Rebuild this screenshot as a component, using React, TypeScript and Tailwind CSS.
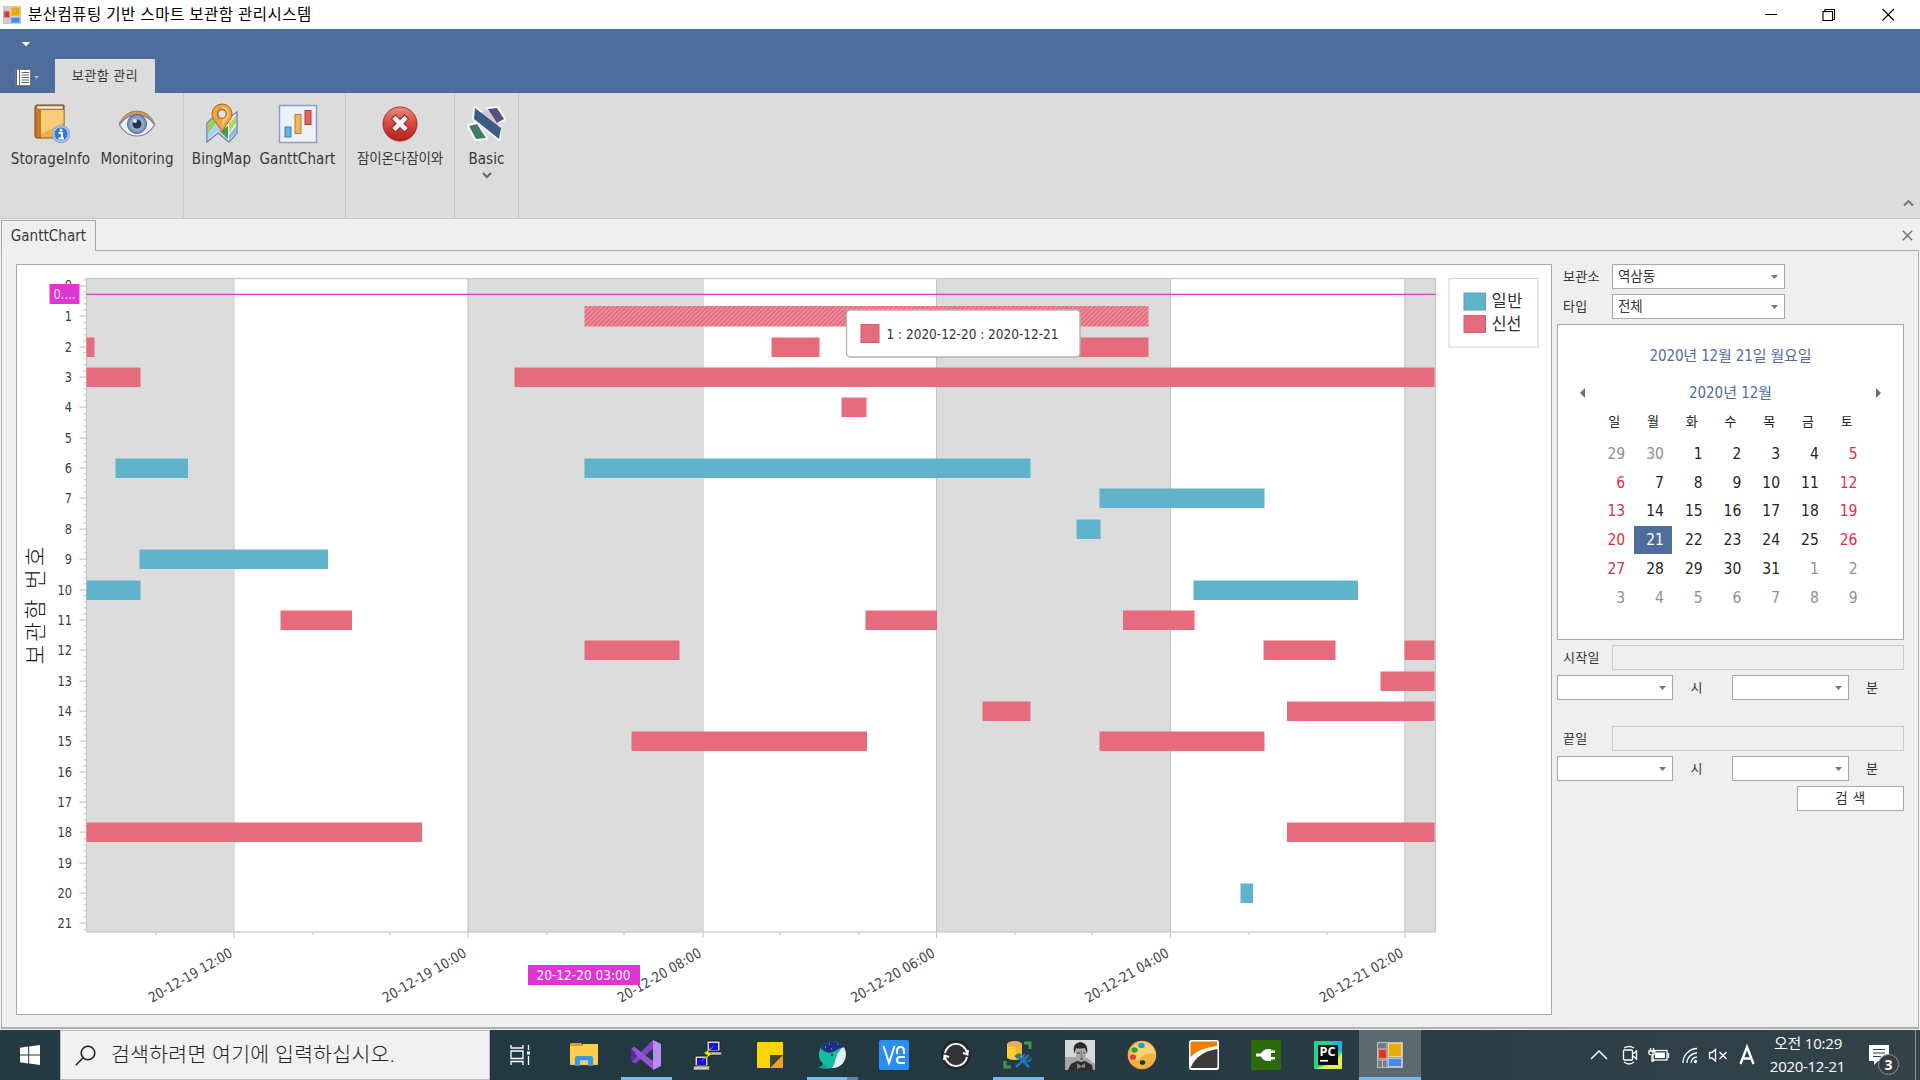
import React from "react";

const SANS = "font-['DejaVu_Sans_Condensed','DejaVu_Sans','Noto_Sans_CJK_KR',sans-serif] [font-stretch:condensed]";
const UI = "font-['Open_Sans','Noto_Sans_CJK_KR',sans-serif] [font-stretch:normal]";

/* ---------- ribbon icons ---------- */

const FormIcon = ({ size }: { size: number }) => (
  <svg width={size} height={size} viewBox="0 0 26 26">
    <rect x="0.5" y="0.5" width="25" height="25" fill="#8f979b" fillOpacity=".45" stroke="#b9bec0" />
    <path d="M1 7H10M10 1V25M1 18H10M5.500 18V25M10 16H25" stroke="#c4c8ca" />
    <rect x="11.500" y="1.500" width="13" height="13" fill="#e6ac0c" stroke="#f5d977" />
    <rect x="1.500" y="7.500" width="8" height="9" fill="#d33b33" stroke="#f08d83" />
    <rect x="11.500" y="16.500" width="13" height="8" fill="#4c86e8" stroke="#a9c8fb" />
  </svg>
);

const BookIcon = () => (
  <svg width="40" height="42" viewBox="0 0 40 42">
    <path d="M4 4Q4 2 6 2H33V35H6Q4 35 4 33Z" fill="#c77a25" stroke="#80430f" />
    <path d="M6 3H32V6H7Q5 5 6 3Z" fill="#f4f4f4" stroke="#89613b" strokeWidth=".6" />
    <path d="M10 7H32.500V34.500H10Z" fill="#ecb04b" />
    <path d="M10 7H32.500V20L10 31Z" fill="#f6cd79" />
    <circle cx="30" cy="31" r="8.500" fill="#3978ca" stroke="#9ab4dc" strokeWidth="1.500" />
    <circle cx="30" cy="31" r="7.200" fill="none" stroke="#dce9fa" />
    <circle cx="30" cy="27" r="1.600" fill="#fff" />
    <path d="M27.500 30H31V35M27.500 35.500H33" stroke="#fff" strokeWidth="2" fill="none" />
  </svg>
);

const EyeIcon = () => (
  <svg width="40" height="42" viewBox="0 0 40 42">
    <path d="M2 21Q8 8 20 8Q32 8 38 21Q29 11 20 12Q10 12 2 21Z" fill="#c99562" stroke="#9a6838" strokeWidth=".7" />
    <path d="M2.500 22Q9 12 20 12Q31 12 37.500 22Q31 33 20 33Q9 33 2.500 22Z" fill="#edf0f8" stroke="#7483ad" strokeWidth="1.200" />
    <circle cx="20" cy="21" r="9.500" fill="#7c95b9" stroke="#4c6286" />
    <circle cx="20" cy="21" r="7" fill="#91abca" />
    <circle cx="20" cy="21" r="4.500" fill="#25344d" />
    <circle cx="18" cy="18" r="2" fill="#dce7f4" />
  </svg>
);

const MapIcon = () => (
  <svg width="40" height="42" viewBox="0 0 40 42">
    <path d="M5 20L13 13L21 19L35 9V30L27 39L16 30L5 39Z" fill="#eef3f2" stroke="#7185a5" strokeWidth="1.400" />
    <path d="M6 20L15 12V21L6 30Z" fill="#9ecb58" />
    <path d="M6 30L15 19L26 31V37L15 28L6 37Z" fill="#a9d3f2" />
    <path d="M27 21L34 12V20L27 30Z" fill="#b5d664" />
    <path d="M27 32L34 23V29L27 37Z" fill="#87bce4" />
    <path d="M18 28L26 23V36Z" fill="#3f9a52" />
    <path d="M20 29C17 22 10 17 10 11A10 10 0 0 1 30 11C30 17 23 22 20 29Z" fill="#efa43c" stroke="#a5671b" />
    <path d="M20 3Q28 4 27 13L20 24Z" fill="#f7c56b" />
    <circle cx="20" cy="11" r="4.300" fill="#e3e4df" stroke="#8b6a3a" strokeWidth="1.300" />
  </svg>
);

const GanttIcon = () => (
  <svg width="40" height="42" viewBox="0 0 40 42">
    <rect x="1.500" y="2.500" width="37" height="37" fill="#eef2fb" stroke="#8d9cc9" strokeWidth="1.500" />
    <rect x="7" y="24" width="6" height="10" fill="#6bb2e8" stroke="#3a7cb4" />
    <rect x="17" y="11.500" width="6" height="19" fill="#f2b65a" stroke="#b97a2e" />
    <rect x="27" y="7.500" width="6" height="14" fill="#e1625f" stroke="#b33b3c" />
  </svg>
);

const StopIcon = () => (
  <svg width="40" height="42" viewBox="0 0 40 42">
    <defs>
      <linearGradient id="stop" x1="0" y1="0" x2="0" y2="1">
        <stop offset="0" stopColor="#ee8d80" />
        <stop offset=".45" stopColor="#d84b40" />
        <stop offset="1" stopColor="#b81f1b" />
      </linearGradient>
    </defs>
    <circle cx="20" cy="21" r="17" fill="url(#stop)" stroke="#a32a25" />
    <path d="M15.500 16L24.500 25M24.500 16L15.500 25" stroke="#8f2522" strokeWidth="6.600" strokeLinecap="square" />
    <path d="M15.500 16L24.500 25M24.500 16L15.500 25" stroke="#f2f3fa" strokeWidth="4.600" strokeLinecap="square" />
  </svg>
);

const SkinIcon = () => (
  <svg width="42" height="42" viewBox="0 0 42 42">
    <g stroke="#fafafa" strokeWidth="4" strokeLinejoin="round">
      <path d="M9 5L33 25V36L8 15Z" fill="#fff" />
      <path d="M22 6L31 5L38 16L31 19Z" fill="#fff" />
      <path d="M3 23L11 21L20 35L10 36Z" fill="#fff" />
    </g>
    <path d="M22 6L33 14L31 25L12 12Z" fill="#cfcfcf" />
    <path d="M9 5L35 25L33 36L8 16Z" fill="#3c5c87" />
    <path d="M22 6L31 5L38 16L31 20Z" fill="#57507b" />
    <path d="M3 23L11 21L20 35L10 36Z" fill="#437c66" />
  </svg>
);

const RibbonButton = ({ icon, label, width, small, arrow }: { icon: React.ReactNode; label: string; width: string; small?: boolean; arrow?: boolean }) => (
  <div className={`${width} flex flex-col items-center pt-[10px]`}>
    <div className="h-[42px] flex justify-center">{icon}</div>
    <div className={`h-6 leading-6 whitespace-nowrap ${small ? "mt-[1px] mb-[1px] text-[13.5px] tracking-[-0.1px]" : "mt-[2px] text-[15px] tracking-[0.1px]"}`}>{label}</div>
    {arrow && (
      <svg width="10" height="7" viewBox="0 0 10 7" className="mt-[1px]">
        <path d="M1 1L5 5L9 1" fill="none" stroke="#666" strokeWidth="2" />
      </svg>
    )}
  </div>
);

/* ---------- chart ---------- */

const BLUE = "#61b3cc";
const RED = "#e66b7d";
const rowY = (n: number) => Math.round(286 + 30.350 * n);

const bars: [number, number, number, string][] = [
  [2, 87, 95, RED], [2, 772, 820, RED], [2, 1052, 1149, RED],
  [3, 87, 141, RED], [3, 515, 1435, RED], [4, 842, 867, RED],
  [6, 116, 188.500, BLUE], [6, 585, 1031, BLUE], [7, 1100, 1265, BLUE],
  [8, 1077, 1101, BLUE], [9, 140, 328.500, BLUE], [10, 87, 141, BLUE],
  [10, 1194, 1358.500, BLUE], [11, 281, 352.500, RED], [11, 866, 937.500, RED],
  [11, 1123.500, 1195, RED], [12, 585, 680, RED], [12, 1264, 1336, RED],
  [12, 1405, 1435, RED], [13, 1381, 1435, RED], [14, 983, 1031, RED],
  [14, 1287.500, 1435, RED], [15, 632, 867.500, RED], [15, 1100, 1265, RED],
  [18, 87, 422.500, RED], [18, 1287.500, 1435, RED], [20, 1241, 1253.500, BLUE],
];

const bands: [number, number][] = [[87, 234], [468, 703], [937, 1171], [1405, 1436]];
const xLabels: [number, string][] = [
  [234, "20-12-19 12:00"], [468, "20-12-19 10:00"], [703, "20-12-20 08:00"],
  [936.500, "20-12-20 06:00"], [1170.500, "20-12-21 04:00"], [1405, "20-12-21 02:00"],
];
const xMinor = [156, 313, 390, 547, 624, 780, 859, 1015, 1092, 1249, 1327];

const Chart = () => (
  <svg width="1534" height="749" viewBox="17.500 265 1534 749" className={SANS}>
    <defs>
      <pattern id="hatch" width="4.500" height="4.500" patternUnits="userSpaceOnUse">
        <rect width="4.500" height="4.500" fill={RED} />
        <path d="M-1 5.500L5.500 -1M-1 1L1 -1M3.500 5.500L5.500 3.500" stroke="#f0a3ae" strokeWidth="1" />
      </pattern>
    </defs>
    {bands.map(([a, b]) => <rect key={a} x={a} y="278" width={b - a} height="654" fill="#dcdcdc" />)}
    {xLabels.map(([x]) => <rect key={x} x={x} y="278" width="1" height="660" fill="#c3c3c3" />)}
    {xMinor.map((x) => <rect key={x} x={x} y="932" width="1" height="3" fill="#bbb" />)}
    <rect x="87" y="278.500" width="1349" height="653.500" fill="none" stroke="#c9c9c9" strokeWidth="1.300" />
    {Array.from({ length: 22 }, (_, n) => (
      <g key={n}>
        <rect x="80" y={rowY(n) - 0.5} width="7" height="1.200" fill="#c6c6c6" />
        {[1, 2, 3, 4].map((k) => {
          const y = rowY(n) - k * 6.070;
          return y > 279 ? <rect key={k} x="84" y={y - 0.5} width="3" height="1" fill="#c4c4c4" /> : null;
        })}
        <text x="72.500" y={rowY(n) + (n === 0 ? 4 : 5)} textAnchor="end" fontSize="14" fill="#3c3c3c" textLength={n > 9 ? 14.500 : 7.200} lengthAdjust="spacingAndGlyphs">{n}</text>
      </g>
    ))}
    <rect x="84" y="929" width="3" height="1" fill="#c4c4c4" />
    {bars.map(([n, a, b, c]) => (
      <rect key={`${n}-${a}`} x={a} y={rowY(n) - 9.500} width={b - a} height="19.500" fill={c} />
    ))}
    <rect x="585" y="306" width="564" height="20.500" fill="url(#hatch)" />
    <rect x="87" y="293.700" width="1349" height="1.300" fill="#e03bd0" />
    <rect x="50" y="284" width="30" height="20" fill="#df35d2" />
    <text x="54" y="299" fontSize="14" fill="#fff" fillOpacity=".9" textLength="22" lengthAdjust="spacingAndGlyphs">0....</text>
    {xLabels.map(([x, t]) => (
      <text key={x} transform={`translate(${x} 956) rotate(-30)`} textAnchor="end" fontSize="14" fill="#444" textLength="94" lengthAdjust="spacingAndGlyphs">{t}</text>
    ))}
    <rect x="528.500" y="965" width="112" height="20" fill="#df35d2" />
    <text x="537" y="980" fontSize="14" fill="#fff" textLength="94" lengthAdjust="spacingAndGlyphs">20-12-20 03:00</text>
    <text transform="translate(43 664.5) rotate(-90)" fontSize="21.500" fill="#111" fontWeight="300" textLength="118" className="font-['Noto_Sans_CJK_KR',sans-serif]">보관함 번호</text>

    <rect x="1449.500" y="278.500" width="89" height="68.500" fill="#fff" stroke="#d0d0d0" />
    <rect x="1464.500" y="293" width="21.500" height="17" fill={BLUE} stroke="#5aa2b9" />
    <rect x="1464.500" y="315.500" width="21.500" height="17" fill={RED} stroke="#cf6172" />
    <text x="1492" y="307" fontSize="16.500" fill="#333" textLength="31" className="font-['Noto_Sans_CJK_KR',sans-serif]">일반</text>
    <text x="1492" y="330" fontSize="16.500" fill="#333" textLength="30" className="font-['Noto_Sans_CJK_KR',sans-serif]">신선</text>

    <rect x="847" y="310" width="233.500" height="47" rx="4" fill="#fff" stroke="#b3b3b3" strokeWidth="1.400" />
    <rect x="861.500" y="324.500" width="18" height="18" fill={RED} stroke="#d0606f" />
    <text x="887" y="339" fontSize="14" fill="#333" textLength="172" lengthAdjust="spacingAndGlyphs">1 : 2020-12-20 : 2020-12-21</text>
  </svg>
);

/* ---------- side form ---------- */

const Combo = ({ width, text }: { width: string; text?: string }) => (
  <div className={`${width} h-[25px] shrink-0 bg-white border border-[#a8a8a8] flex items-center justify-between pl-[5px] pr-[6px] text-[13.5px]`}>
    <span className="tracking-[-0.1px]">{text}</span>
    <svg width="7" height="4" viewBox="0 0 7 4"><path d="M0 0H7L3.500 4Z" fill="#777" /></svg>
  </div>
);

const Label = ({ children }: { children: React.ReactNode }) => (
  <div className="w-[55px] pl-[6px] shrink-0 text-[13px] tracking-[0.3px]">{children}</div>
);

const weeks = [
  [29, 30, 1, 2, 3, 4, 5], [6, 7, 8, 9, 10, 11, 12], [13, 14, 15, 16, 17, 18, 19],
  [20, 21, 22, 23, 24, 25, 26], [27, 28, 29, 30, 31, 1, 2], [3, 4, 5, 6, 7, 8, 9],
];

const dayColor = (w: number, c: number, d: number) => {
  if ((w === 0 && d > 20) || (w > 3 && d < 15)) return "text-[#8f8f8f]";
  if (w === 3 && c === 1) return "bg-[#4f6d9c] text-white";
  return c === 0 || c === 6 ? "text-[#dc2f4a]" : "text-[#252525]";
};

const Calendar = () => (
  <div className="h-[316px] w-[347px] bg-white border border-[#a8a8a8] flex flex-col">
    <div className="mt-[19px] h-6 leading-6 text-center text-[15px] text-[#4f6d9c] tracking-[-0.15px]">2020년 12월 21일 월요일</div>
    <div className="mt-[13px] h-6 flex items-center justify-between px-[22px] text-[15px] text-[#4f6d9c]">
      <svg width="5" height="10" viewBox="0 0 5 10"><path d="M5 0V10L0 5Z" fill="#6e6e6e" /></svg>
      <span className="tracking-[-0.05px]">2020년 12월</span>
      <svg width="5" height="10" viewBox="0 0 5 10"><path d="M0 0V10L5 5Z" fill="#6e6e6e" /></svg>
    </div>
    <div className="ml-[37px] w-[271px] grid grid-cols-7 mt-[4px] h-[26px] text-center text-[13px] leading-[26px] text-[#222]">
      {["일", "월", "화", "수", "목", "금", "토"].map((d) => <div key={d}>{d}</div>)}
    </div>
    <div className="ml-[37px] w-[271px] h-[173px] grid grid-cols-7 grid-rows-6 mt-[4px] text-[15.5px]">
      {weeks.flatMap((w, i) => w.map((d, c) => (
        <div key={`${i}-${c}`} className={`flex items-center justify-end pt-[2px] pr-[8.5px] ${dayColor(i, c, d)}`}>{d}</div>
      )))}
    </div>
  </div>
);

const TimeRow = () => (
  <div className="flex items-center mt-[5px] text-[13px]">
    <Combo width="w-[116px]" />
    <div className="w-[59px] text-center pr-[12px]">시</div>
    <Combo width="w-[117px]" />
    <div className="pl-[17px]">분</div>
  </div>
);

const SidePanel = () => (
  <div className="ml-[5px] w-[347px] text-[#333]">
    <div className="flex items-center"><Label>보관소</Label><Combo width="w-[173px]" text="역삼동" /></div>
    <div className="flex items-center mt-[5px] mb-[5px]"><Label>타입</Label><Combo width="w-[173px]" text="전체" /></div>
    <Calendar />
    <div className="flex items-center mt-[5px]"><Label>시작일</Label><div className="h-[25px] flex-1 border border-[#cacaca]" /></div>
    <TimeRow />
    <div className="flex items-center mt-[26px]"><Label>끝일</Label><div className="h-[25px] flex-1 border border-[#cacaca]" /></div>
    <TimeRow />
    <div className="ml-auto mt-[5px] w-[107px] h-[25px] bg-white border border-[#a8a8a8] text-[13.5px] tracking-[0.6px] flex items-center justify-center">검 색</div>
  </div>
);

/* ---------- taskbar icons ---------- */

const Explorer = () => (
  <svg width="30" height="30" viewBox="0 0 30 30">
    <path d="M1 4Q1 3 2 3H12L15 6V10H1Z" fill="#dca00e" />
    <rect x="1" y="6" width="28" height="19" rx="1" fill="#fdcd50" />
    <rect x="14" y="4" width="15" height="4" fill="#fdcd50" />
    <path d="M6 26V18Q6 16 8 16H22Q24 16 24 18V26H19V21H11V26Z" fill="#3c97dc" />
    <rect x="11" y="20" width="8" height="1.500" fill="#8ac6f1" />
  </svg>
);
const VisualStudio = () => (
  <svg width="30" height="30" viewBox="0 0 30 30">
    <path d="M1 21L22 0V9L5 23L2 23Z" fill="#8145c4" />
    <path d="M0 9L3 6.500L23 22V30L0 11Z" fill="#9256d6" />
    <path d="M0 9L4 12V18L0 21Z" fill="#6425a0" />
    <path d="M22 0L30 4V26L22 30Z" fill="#b98cf2" />
  </svg>
);
const Putty = () => (
  <svg width="30" height="30" viewBox="0 0 30 30">
    <path d="M14 1H27V11H14Z" fill="#d9d9d2" stroke="#222" />
    <rect x="16" y="3" width="9" height="7" fill="#1212e8" />
    <path d="M13 12H29L28 15H12Z" fill="#cacac2" stroke="#222" strokeWidth=".6" />
    <path d="M2 16H15V26H2Z" fill="#d9d9d2" stroke="#222" />
    <rect x="4" y="18" width="9" height="7" fill="#1212e8" />
    <path d="M1 26H17L16 30H0Z" fill="#cacac2" stroke="#222" strokeWidth=".6" />
    <path d="M21 6L11 13L15 15L8 21L19 14L15 12Z" fill="#f6ee10" stroke="#554" strokeWidth=".4" />
  </svg>
);
const Sticky = () => (
  <svg width="30" height="30" viewBox="0 0 30 30">
    <rect x="2" y="2" width="26" height="26" rx="1" fill="#ffd500" />
    <path d="M15 15H28V28H15Z" fill="#433f3b" />
    <path d="M15 28L28 15V28Z" fill="#e8a713" />
  </svg>
);
const Whale = () => (
  <svg width="30" height="30" viewBox="0 0 30 30">
    <circle cx="15.500" cy="14.500" r="13.500" fill="#16bda0" />
    <path d="M27 7Q31 16 26 23Q22 28 15 28Q18 24 19 18Q21 10 27 7Z" fill="#e6edec" />
    <path d="M2 11Q1 20 7 23Q6 27 2 27Q9 30 15 28L12 18Z" fill="#16bda0" />
    <path d="M1 20L6 23L3 27L0 26Z" fill="#243a42" />
    <path d="M1 27Q6 27 6 23L11 27Q6 30 1 27Z" fill="#0fa88f" />
    <path d="M4 8Q7 1 15 1Q23 1 27 7Q22 8 18 11Q13 14 9 12Q6 11 4 8Z" fill="#222e86" />
    <path d="M8 7H9M12 4H13M20 4H21M14 9H15" stroke="#9fb2ff" />
    <circle cx="15" cy="15" r="1.100" fill="#123" />
  </svg>
);
const Vnc = () => (
  <svg width="30" height="30" viewBox="0 0 30 30" fill="none" stroke="#fff" strokeWidth="2">
    <rect width="30" height="30" rx="2" fill="#2a8df3" stroke="none" />
    <path d="M4.500 6L10 23L15.500 6" />
    <path d="M18 14V11Q18 7 21.500 7Q25 7 25 11V14M26 17H21Q18 17 18 20Q18 23 21 23H26" />
  </svg>
);
const Sync = () => (
  <svg width="30" height="30" viewBox="0 0 30 30" fill="none" stroke="#fff" strokeWidth="1.900">
    <circle cx="15" cy="15" r="14" fill="#333" stroke="#181818" strokeWidth="1" />
    <path d="M4 13A11.200 11.200 0 0 1 26 13M26 17A11.200 11.200 0 0 1 4 17" />
    <path d="M22 13L26.500 14.500L27 10M8 17L3.500 15.500L3 20" />
  </svg>
);
const DbTools = () => (
  <svg width="30" height="30" viewBox="0 0 30 30">
    <path d="M4 4V18Q11 22 19 18V4Z" fill="#fcd12e" />
    <path d="M13 4H19V18L13 20Z" fill="#f0b920" />
    <ellipse cx="11.500" cy="4" rx="7.500" ry="3" fill="#edaa5f" />
    <path d="M21 3H27V9M2 21V27H8" stroke="#3f9846" strokeWidth="3" fill="none" />
    <path d="M15 16L26 27M26 15L13 27" stroke="#2276b8" strokeWidth="2.600" />
    <path d="M11 16L16 13L19 15L15 19Z" fill="#2276b8" />
    <path d="M22 14A4 4 0 1 0 28 18" stroke="#2276b8" strokeWidth="2" fill="none" />
  </svg>
);
const Portrait = () => (
  <svg width="30" height="30" viewBox="0 0 30 30">
    <rect width="30" height="30" fill="#d9d9d9" />
    <path d="M0 17H9L22 18L30 24V30H0Z" fill="#a5a5a5" />
    <path d="M3 30L6 24L12 21H20L27 25L28 30Z" fill="#2d2d2d" />
    <path d="M12 23L16 26L20 23V28L16 27L12 29Z" fill="#888" />
    <path d="M10 9Q11 5 16 5Q21 6 21 12Q21 19 17 22Q12 22 11 16Z" fill="#a9a9a9" />
    <path d="M9 14Q7 3 15 2Q24 3 22 14L20 8Q14 9 11 8Z" fill="#292929" />
    <path d="M12 13H15M18 13H20M15 19H18" stroke="#333" />
    <path d="M16 10V17H18" stroke="#777" fill="none" />
  </svg>
);
const Palette = () => (
  <svg width="30" height="30" viewBox="0 0 30 30">
    <circle cx="15" cy="15" r="14.300" fill="#f2b13f" />
    <path d="M4 16Q2 6 13 2Q26 1 28 14Q17 12 10 21Z" fill="#fbd176" />
    <ellipse cx="14.500" cy="5.500" rx="3.300" ry="2.700" fill="#2897cf" />
    <ellipse cx="7.500" cy="10" rx="3.200" ry="2.800" fill="#32a12d" />
    <ellipse cx="6" cy="17" rx="3.100" ry="2.700" fill="#e63b31" />
    <ellipse cx="15.500" cy="22.500" rx="2.700" ry="2.300" fill="#222c31" />
  </svg>
);
const Swoosh = () => (
  <svg width="30" height="30" viewBox="0 0 30 30">
    <rect width="30" height="30" rx="2.500" fill="#fff" />
    <path d="M1.500 2Q1.500 1.500 3 1.500H28V6Q10 8 1.500 17Z" fill="#ef7d05" />
    <path d="M28.500 9V27Q28.500 28 27 28H1.500Q8 12 28.500 9Z" fill="#3c3b3a" />
  </svg>
);
const Plug = () => (
  <svg width="30" height="30" viewBox="0 0 30 30">
    <rect width="30" height="30" fill="#2e6a10" />
    <path d="M5 13.500H10Q12 9 18 9V21Q12 21 10 16.500H5Z" fill="#fff" />
    <path d="M18 9H20V21H18ZM20 10.500H24V13H20ZM20 17H24V19.500H20Z" fill="#fff" />
  </svg>
);
const PyCharm = () => (
  <svg width="30" height="30" viewBox="0 0 30 30">
    <rect x="1" y="1" width="28" height="28" fill="#21d789" />
    <path d="M17 1H29V16L22 5Z" fill="#19b4e8" />
    <path d="M29 12V29H2L22 22Z" fill="#e9ee50" />
    <rect x="5" y="5" width="20" height="20" fill="#0c0c0c" />
    <text x="6.500" y="16" fontSize="11.500" fontWeight="700" fill="#fff" textLength="16" lengthAdjust="spacingAndGlyphs" className="font-['Open_Sans',sans-serif]">PC</text>
    <rect x="7" y="20" width="8" height="1.600" fill="#fff" />
  </svg>
);

const tasks: [React.ReactNode, string][] = [
  [<Explorer />, ""], [<VisualStudio />, "run"], [<Putty />, ""], [<Sticky />, ""], [<Whale />, "multi"],
  [<Vnc />, ""], [<Sync />, ""], [<DbTools />, "run"], [<Portrait />, ""], [<Palette />, ""],
  [<Swoosh />, ""], [<Plug />, ""], [<PyCharm />, ""], [<FormIcon size={26} />, "active"],
];

const Taskbar = () => (
  <div className={`h-[50px] flex text-white bg-linear-to-r from-[#233b42] via-[#233841] to-[#32434a] ${UI}`}>
    <div className="w-[60px] flex items-center justify-center">
      <svg width="20" height="20" viewBox="0 0 20 20" fill="#fff">
        <path d="M0 2.800L8.200 1.600V9.500H0ZM9.200 1.500L20 0V9.500H9.200ZM0 10.500H8.200V18.400L0 17.200ZM9.200 10.500H20V20L9.200 18.500Z" />
      </svg>
    </div>
    <div className="w-[430px] bg-[#f1f1f1] border border-[#bcbcbc] flex items-center pl-[14px] text-[#222]">
      <svg width="21" height="21" viewBox="0 0 21 21" fill="none" stroke="#222" strokeWidth="1.600">
        <circle cx="13" cy="8" r="6.800" /><path d="M8.200 12.800L.7 20.300" />
      </svg>
      <span className="ml-[15px] -mt-[1px] whitespace-nowrap text-[20.5px] font-light tracking-[0.25px]">검색하려면 여기에 입력하십시오.</span>
    </div>
    <div className="w-[63px] flex items-center justify-center pr-[2px]">
      <svg width="21" height="20" viewBox="0 0 21 20" fill="none" stroke="#fff" strokeWidth="1.300">
        <path d="M1 0V3H13V0M1 20V16.500H13V20M1 6H13V13.500H1ZM18.500 0V5M18.500 11V20" />
        <rect x="17" y="6.500" width="3" height="3" fill="#fff" stroke="none" />
      </svg>
    </div>
    <div className="flex">
      {tasks.map(([icon, state], i) => (
        <div key={i} className={`w-[62px] h-[50px] flex flex-col items-center ${state === "active" ? "bg-[#5c696e]" : ""}`}>
          <div className="h-[47px] pt-[3px] flex items-center">{icon}</div>
          {state === "run" && <div className="w-[51px] h-[3px] bg-[#76b9ed]" />}
          {state === "active" && <div className="w-full h-[3px] bg-[#76b9ed]" />}
          {state === "multi" && (
            <div className="flex w-[51px]"><div className="w-10 h-[3px] bg-[#76b9ed]" /><div className="w-[11px] h-[3px] bg-[#5b87a8]" /></div>
          )}
        </div>
      ))}
    </div>
    <div className="ml-auto flex items-center pr-[4px]">
      <svg width="168" height="30" viewBox="1590 1040 168 30" fill="none" stroke="#fff" strokeWidth="1.300">
        <path d="M1591 1059L1599 1051L1607 1059" strokeWidth="1.500" />
        <rect x="1623.500" y="1050" width="9" height="10" rx="1" />
        <path d="M1633 1054L1636.500 1051V1059L1633 1056M1624 1048Q1629 1045 1634 1048M1624 1062Q1629 1066 1634 1062" />
        <rect x="1653" y="1050.500" width="14" height="9.500" />
        <rect x="1655" y="1052.500" width="10" height="5.500" fill="#fff" stroke="none" />
        <path d="M1668.500 1053V1058M1649 1051H1655V1054Q1652 1056 1649 1054ZM1650.500 1051V1048M1653.500 1051V1048M1652 1056V1061H1654" />
        <circle cx="1695.500" cy="1061.500" r="1.700" fill="#fff" stroke="none" />
        <path d="M1691 1063A6 6 0 0 1 1697 1057M1687 1063A10 10 0 0 1 1697 1053M1683 1063A14.500 14.500 0 0 1 1697 1048.500" />
        <path d="M1709.500 1052.500H1712L1715.500 1049.500V1061L1712 1058H1709.500ZM1719.500 1052L1726.500 1059M1726.500 1052L1719.500 1059" />
        <path d="M1740.500 1064L1747 1047L1753.500 1064M1743 1058.500H1751" strokeWidth="2.400" />
      </svg>
      <div className="w-[100px] text-center text-[15px] leading-[23px] -mt-[1px]">
        <div className="tracking-[-0.2px]">오전 10:29</div>
        <div className="tracking-[-0.3px] -ml-[1px]">2020-12-21</div>
      </div>
      <div className="relative w-[57px] h-[50px] flex pl-[11px] pt-[15px]">
        <svg width="20" height="20" viewBox="0 0 20 20">
          <path d="M0 0H20V16H9L5 20V16H0Z" fill="#fff" /><path d="M4 4.500H16M4 8H16M4 11.500H12" stroke="#2f4047" strokeWidth="1.200" />
        </svg>
        <div className="absolute left-[20px] top-[24px] w-[21px] h-[21px] rounded-full bg-[#363c3f] border border-[#8b9497] text-[14px] font-bold leading-[19px] text-center">3</div>
      </div>
      <div className="w-px h-[50px] bg-[#87939a]" />
    </div>
  </div>
);

/* ---------- window ---------- */

export default function App() {
  return (
    <div className={`w-[1920px] h-[1080px] overflow-hidden flex flex-col bg-[#efefef] text-[#383838] ${SANS}`}>
      <div className={`h-[29px] bg-white flex items-center pl-[3px] text-black ${UI}`}>
        <FormIcon size={18} />
        <span className="ml-[7px] text-[15.5px] tracking-[0.5px] leading-[26px] h-[28px] whitespace-nowrap">분산컴퓨팅 기반 스마트 보관함 관리시스템</span>
        <svg className="ml-auto mr-[25px]" width="130" height="14" viewBox="0 0 130 14" fill="none" stroke="#000" strokeWidth="1.100">
          <path d="M0 6.500H12M117.500 1L129 12.500M129 1L117.500 12.500M60 3.500V1.500H69.500V11.500H67.500" />
          <rect x="58" y="3.500" width="9.500" height="9" />
        </svg>
      </div>

      <div className="h-[64px] bg-[#4f6d9c] flex flex-col">
        <div className="h-[30px] pl-[22px] pt-[13px]">
          <svg width="8" height="5" viewBox="0 0 8 5"><path d="M0 0H8L4 4.500Z" fill="#fff" /></svg>
        </div>
        <div className="h-[34px] flex">
          <div className="w-[55px] pl-[15px] pt-[10px] flex gap-[3px]">
            <svg width="17" height="17" viewBox="0 0 17 17">
              <rect width="16" height="17" fill="#fff" /><path d="M1.500 0V17M4.500 0V17" stroke="#666" />
              <path d="M6.500 3.500H14M6.500 6H14M6.500 8.500H14M6.500 11H14M6.500 13.500H14" stroke="#666" />
              <rect x=".5" y=".5" width="15" height="16" fill="none" stroke="#777" />
            </svg>
            <svg width="5" height="3" viewBox="0 0 5 3" className="mt-[7px] -ml-[1px]"><path d="M0 0H5L2.500 3Z" fill="#bbb" /></svg>
          </div>
          <div className="w-[100px] bg-[#dcdcdc] text-center text-[13px] leading-[33px] tracking-[0.5px]">보관함 관리</div>
        </div>
      </div>

      <div className="h-[126px] bg-[#dcdcdc] border-b border-[#c6c6c6] flex">
        <div className="w-[184px] border-r border-[#c6c6c6] flex pl-[2px]">
          <RibbonButton icon={<BookIcon />} label="StorageInfo" width="w-[97px]" />
          <RibbonButton icon={<EyeIcon />} label="Monitoring" width="w-[76px]" />
        </div>
        <div className="w-[162px] border-r border-[#c6c6c6] flex pl-[5px]">
          <RibbonButton icon={<MapIcon />} label="BingMap" width="w-[65px]" />
          <RibbonButton icon={<GanttIcon />} label="GanttChart" width="w-[87px]" />
        </div>
        <div className="w-[109px] border-r border-[#c6c6c6]">
          <RibbonButton icon={<StopIcon />} label="잠이온다잠이와" width="w-[108px]" small />
        </div>
        <div className="w-[64px] border-r border-[#c6c6c6]">
          <RibbonButton icon={<SkinIcon />} label="Basic" width="w-[63px]" arrow />
        </div>
        <svg className="ml-auto mr-[6px] mt-[106px]" width="11" height="8" viewBox="0 0 11 8">
          <path d="M1 6.500L5.500 2L10 6.500" fill="none" stroke="#707070" strokeWidth="1.900" />
        </svg>
      </div>

      <div className="h-[32px] flex pl-[1px] pt-[1px]">
        <div className="w-[95px] border border-b-0 border-[#a8a8a8] text-center text-[15px] tracking-[0.05px] leading-[31px]">GanttChart</div>
        <div className="flex-1 mr-[1px] border-b border-[#a8a8a8] flex items-center justify-end pr-[6px]">
          <svg width="11" height="11" viewBox="0 0 11 11"><path d="M.8 .8L10.200 10.200M10.200 .8L.8 10.200" stroke="#777" strokeWidth="1.500" /></svg>
        </div>
      </div>

      <div className="h-[779px] pb-[1px]">
        <div className="h-[778px] mx-[1px] border border-t-0 border-[#b0b0b0] border-b-2 flex pl-[14px] pt-[13px]">
          <div className="w-[1536px] h-[751px] bg-white border border-[#a8a8a8]"><Chart /></div>
          <SidePanel />
        </div>
      </div>
      <Taskbar />
    </div>
  );
}
